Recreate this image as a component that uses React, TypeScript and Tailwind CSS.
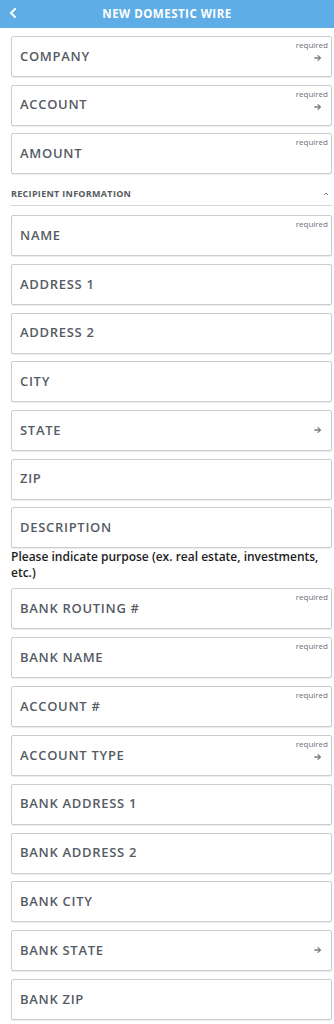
import React from "react";

type F = { label: string; req?: boolean; arrow?: boolean };

const Arrow = () => (
  <svg width="8" height="8" viewBox="0 0 10 10" className="text-[#7a7f86]">
    <path d="M1 5h7M5 2l3 3-3 3" stroke="currentColor" strokeWidth="1.6" fill="none" strokeLinecap="round" strokeLinejoin="round" />
  </svg>
);

const Field = ({ label, req, arrow }: F) => (
  <div className="relative h-[41px] ml-[11px] mr-[2px] border border-[#c9ccd0] rounded-[2px] bg-white flex items-center pl-[8px] shadow-[0_1px_1px_rgba(0,0,0,0.08)]">
    <span className="text-[13px] font-semibold text-[#555b64] tracking-[0.7px]" style={{ fontFamily: '"Open Sans", sans-serif' }}>
      {label}
    </span>
    {req && (
      <span className="absolute right-[3px] top-[2px] text-[8px] text-[#6b6f75]" style={{ fontFamily: '"Open Sans", sans-serif' }}>
        required
      </span>
    )}
    {arrow && (
      <span className={`absolute right-[9px] ${req ? "top-[17px]" : "top-[15px]"} flex`}>
        <Arrow />
      </span>
    )}
  </div>
);

export default function App() {
  const top: F[] = [
    { label: "COMPANY", req: true, arrow: true },
    { label: "ACCOUNT", req: true, arrow: true },
    { label: "AMOUNT", req: true },
  ];
  const rec: F[] = [
    { label: "NAME", req: true },
    { label: "ADDRESS 1" },
    { label: "ADDRESS 2" },
    { label: "CITY" },
    { label: "STATE", arrow: true },
    { label: "ZIP" },
    { label: "DESCRIPTION" },
  ];
  const bank: F[] = [
    { label: "BANK ROUTING #", req: true },
    { label: "BANK NAME", req: true },
    { label: "ACCOUNT #", req: true },
    { label: "ACCOUNT TYPE", req: true, arrow: true },
    { label: "BANK ADDRESS 1" },
    { label: "BANK ADDRESS 2" },
    { label: "BANK CITY" },
    { label: "BANK STATE", arrow: true },
    { label: "BANK ZIP" },
  ];
  return (
    <div className="w-[334px] min-h-[1024px] bg-white" style={{ fontFamily: '"Open Sans", sans-serif' }}>
      <div className="relative h-[28px] bg-[#5fade6] flex items-center justify-center">
        <svg width="8" height="10" viewBox="0 0 8 10" className="absolute left-[9px] top-[8px]">
          <path d="M6 1L2 5l4 4" stroke="white" strokeWidth="2" fill="none" strokeLinecap="round" strokeLinejoin="round" />
        </svg>
        <span className="text-white text-[11.5px] font-bold tracking-[0.5px]">NEW DOMESTIC WIRE</span>
      </div>
      <div className="pt-[8px] flex flex-col gap-[7.6px]">
        {top.map((f) => (
          <Field key={f.label} {...f} />
        ))}
      </div>
      <div className="ml-[11px] mr-[2px] mt-[9px] h-[23px] border-b border-[#d4d6d9] flex items-center justify-between">
        <span className="text-[9px] font-bold text-[#555a60] tracking-[0.3px]">RECIPIENT INFORMATION</span>
        <svg width="6" height="4" viewBox="0 0 6 4" className="mr-[3px]">
          <path d="M1 3l2-2 2 2" stroke="#888" strokeWidth="1" fill="none" />
        </svg>
      </div>
      <div className="pt-[9px] flex flex-col gap-[7.7px]">
        {rec.map((f) => (
          <Field key={f.label} {...f} />
        ))}
      </div>
      <p className="ml-[11px] mr-[6px] mt-[1px] text-[12px] leading-[16px] font-semibold text-[#222]">
        Please indicate purpose (ex. real estate, investments, etc.)
      </p>
      <div className="pt-[7px] flex flex-col gap-[7.85px]">
        {bank.map((f) => (
          <Field key={f.label} {...f} />
        ))}
      </div>
    </div>
  );
}
